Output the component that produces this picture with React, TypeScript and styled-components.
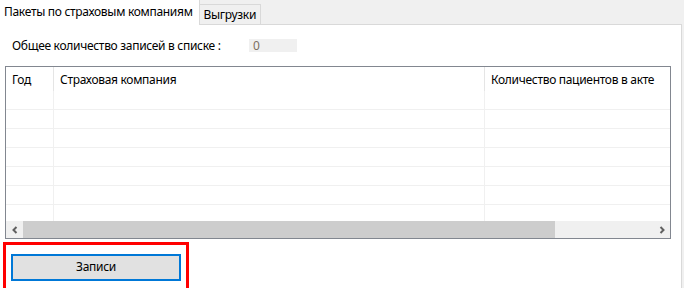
import styled, { createGlobalStyle } from "styled-components"

const GlobalStyle = createGlobalStyle`
  html, body {
    margin: 0;
    padding: 0;
    background: #f0f0f0;
  }
  body {
    font-family: "Noto Sans", "Open Sans", "DejaVu Sans", sans-serif;
    font-size: 12px;
    letter-spacing: -0.3px;
    color: #000;
  }
`

const Window = styled.div`
  width: 682px;
  height: 288px;
  display: flex;
  flex-direction: column;
  overflow: hidden;
`

/* tabs */
const TabStrip = styled.div`
  display: flex;
  align-items: flex-start;
  height: 25px;
`

const Tab = styled.div<{ active?: boolean }>`
  box-sizing: border-box;
  display: flex;
  align-items: center;
  white-space: nowrap;
  background: ${({ active }) => (active ? "#fff" : "#f0f0f0")};
  height: ${({ active }) => (active ? "25px" : "21px")};
  margin-top: ${({ active }) => (active ? "0" : "4px")};
  padding: ${({ active }) => (active ? "0 6px 3px 4px" : "0 4px 0 4px")};
  border-right: 1px solid #d9d9d9;
  border-top: ${({ active }) => (active ? "none" : "1px solid #d9d9d9")};
  border-bottom: ${({ active }) => (active ? "none" : "1px solid #d9d9d9")};
`

const TabFiller = styled.div`
  flex: 1;
  align-self: stretch;
  border-bottom: 1px solid #d9d9d9;
`

const Panel = styled.div`
  flex: 1;
  background: #fff;
  border-right: 1px solid #d9d9d9;
  display: flex;
  flex-direction: column;
`

/* count line */
const CountRow = styled.div`
  display: flex;
  align-items: center;
  height: 13px;
  margin-top: 14px;
  padding-left: 12px;
`

const CountLabel = styled.span`
  width: 237px;
  white-space: nowrap;
`

const CountBox = styled.div`
  width: 48px;
  height: 13px;
  background: #f0f0f0;
  color: #7d6f62;
  display: flex;
  align-items: center;
  padding-left: 4px;
  box-sizing: border-box;
  line-height: 1;
`

/* grid */
const Grid = styled.div`
  margin: 14px 0 0 5px;
  width: 666px;
  border: 1px solid #828790;
  box-sizing: border-box;
  display: flex;
  flex-direction: column;
`

const HeaderRow = styled.div`
  display: flex;
  height: 24px;
`

const HeaderCell = styled.div<{ w?: number }>`
  box-sizing: border-box;
  ${({ w }) => (w ? `width: ${w}px;` : "flex: 1;")}
  padding-left: 6px;
  display: flex;
  align-items: center;
  white-space: nowrap;
  border-right: ${({ w }) => (w ? "1px solid #e5e5e5" : "none")};
`

const Body = styled.div`
  height: 130px;
  overflow: hidden;
`

const Row = styled.div`
  display: flex;
  height: 19px;
  box-sizing: border-box;
  border-bottom: 1px solid #f0f0f0;
`

const Cell = styled.div<{ w?: number }>`
  box-sizing: border-box;
  ${({ w }) => (w ? `width: ${w}px;` : "flex: 1;")}
  border-right: ${({ w }) => (w ? "1px solid #f0f0f0" : "none")};
`

const ScrollBar = styled.div`
  display: flex;
  height: 17px;
  background: #f0f0f0;
`

const ScrollArrow = styled.div`
  width: 17px;
  display: flex;
  align-items: center;
  justify-content: center;
`

const Track = styled.div`
  flex: 1;
  display: flex;
`

const Thumb = styled.div`
  width: 532px;
  background: #cdcdcd;
`

/* bottom */
const Highlight = styled.div`
  margin: 3px 0 0 3px;
  width: 186px;
  height: 60px;
  box-sizing: border-box;
  border: 3px solid #ff0000;
  padding: 9px 0 0 5px;
`

const Button = styled.button`
  width: 170px;
  height: 27px;
  box-sizing: border-box;
  background: #e1e1e1;
  border: 2px solid #0078d7;
  font-family: inherit;
  font-size: 12px;
  letter-spacing: inherit;
  color: #000;
  padding: 0 0 2px;
`

const Chevron = ({ dir }: { dir: "left" | "right" }) => (
  <svg width="8" height="8" viewBox="0 0 8 8">
    <path
      d={dir === "left" ? "M5.5 1 L2.5 4 L5.5 7" : "M2.5 1 L5.5 4 L2.5 7"}
      fill="none"
      stroke="#606060"
      strokeWidth="2"
    />
  </svg>
)

const rows = [0, 1, 2, 3, 4, 5, 6]

export default function App() {
  return (
    <Window>
      <GlobalStyle />
      <TabStrip>
        <Tab active>Пакеты по страховым компаниям</Tab>
        <Tab>Выгрузки</Tab>
        <TabFiller />
      </TabStrip>
      <Panel>
        <CountRow>
          <CountLabel>Общее количество записей в списке :</CountLabel>
          <CountBox>0</CountBox>
        </CountRow>
        <Grid>
          <HeaderRow>
            <HeaderCell w={48}>Год</HeaderCell>
            <HeaderCell w={431}>Страховая компания</HeaderCell>
            <HeaderCell>Количество пациентов в акте</HeaderCell>
          </HeaderRow>
          <Body>
            {rows.map((r) => (
              <Row key={r}>
                <Cell w={48} />
                <Cell w={431} />
                <Cell />
              </Row>
            ))}
          </Body>
          <ScrollBar>
            <ScrollArrow>
              <Chevron dir="left" />
            </ScrollArrow>
            <Track>
              <Thumb />
            </Track>
            <ScrollArrow>
              <Chevron dir="right" />
            </ScrollArrow>
          </ScrollBar>
        </Grid>
        <Highlight>
          <Button>Записи</Button>
        </Highlight>
      </Panel>
    </Window>
  )
}
